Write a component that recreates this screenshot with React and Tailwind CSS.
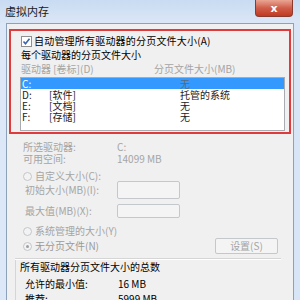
import React from "react";

const F = { fontFamily: '"Noto Sans CJK SC", "Noto Sans", sans-serif' };

function Radio({ checked }) {
  return (
    <span className="relative inline-block w-[9px] h-[9px] rounded-full border border-[#c3c6c9] bg-[#f3f3f3] shrink-0">
      {checked && (
        <span className="absolute left-[2px] top-[2px] w-[3px] h-[3px] rounded-full bg-[#9aa0a6]" />
      )}
    </span>
  );
}

export default function App() {
  return (
    <div
      className="w-[300px] h-[300px] overflow-hidden bg-[#d3e2f4] text-[10px] leading-none text-black flex flex-col"
      style={F}
    >
      {/* title bar */}
      <div className="h-[23px] shrink-0 flex items-start bg-gradient-to-b from-[#c8dbf2] to-[#dbe7f6] relative">
        <span className="ml-[5px] mt-[6px] text-[11px] text-[#1a1a1a]">虚拟内存</span>
        <div className="absolute left-[255px] top-0 w-[38px] h-[17px] rounded-b-[4px] border border-t-0 border-[#8a3a2e] bg-gradient-to-b from-[#e9a693] via-[#cf5d4a] to-[#c2381f] flex items-center justify-center">
          <span className="text-white text-[11px] font-bold leading-none" style={{ fontFamily: '"DejaVu Sans", sans-serif' }}>x</span>
        </div>
      </div>
      {/* body row */}
      <div className="flex-1 flex">
        <div className="w-[6px] shrink-0 bg-[#dce8f7]" />
        <div className="w-[288px] shrink-0 bg-[#f0f0f0] border-l border-r border-t border-[#8da1b8] flex flex-col">
          {/* red box */}
          <div className="ml-[2px] mt-[5px] w-[282px] h-[105px] border-2 border-[#df3a3c] flex flex-col">
            <div className="h-[14px] mt-[3px] flex items-center">
              <span className="ml-[10px] w-[11px] h-[11px] border border-[#8f8f8f] bg-white flex items-center justify-center">
                <svg width="9" height="9" viewBox="0 0 9 9">
                  <path d="M1.5 4.5 L3.5 6.8 L7.5 1.8" stroke="#3b64a6" strokeWidth="1.6" fill="none" />
                </svg>
              </span>
              <span className="ml-[2px] tracking-[0.2px]">自动管理所有驱动器的分页文件大小(A)</span>
            </div>
            <div className="h-[12px] mt-[1px] flex items-center ml-[10px]">每个驱动器的分页文件大小</div>
            <div className="h-[12px] mt-[2px] flex items-center text-[#a5a5a5]">
              <span className="ml-[10px] w-[133px]">驱动器 [卷标](D)</span>
              <span>分页文件大小(MB)</span>
            </div>
            <div className="ml-[9px] mt-[2px] w-[265px] h-[54px] border border-[#a8acb0] bg-white flex flex-col">
              <div className="h-[11px] shrink-0 bg-[#3399ff] text-white flex items-center">
                <span className="ml-[1px] w-[158px]">C:</span>
                <span className="text-[#5a6a7a]">无</span>
              </div>
              {[
                ["D:", "[软件]", "托管的系统"],
                ["E:", "[文档]", "无"],
                ["F:", "[存储]", "无"],
              ].map(([d, l, v]) => (
                <div key={d} className="h-[11px] shrink-0 flex items-center text-[#222]">
                  <span className="ml-[1px] w-[27px]">{d}</span>
                  <span className="w-[131px]">{l}</span>
                  <span>{v}</span>
                </div>
              ))}
            </div>
          </div>

          <div className="mt-[7px] h-[12px] flex items-center text-[#a5a5a5]">
            <span className="ml-[16px] w-[94px]">所选驱动器:</span>
            <span>C:</span>
          </div>
          <div className="h-[12px] flex items-center text-[#a5a5a5]">
            <span className="ml-[16px] w-[94px]">可用空间:</span>
            <span>14099 MB</span>
          </div>
          <div className="mt-[6px] h-[10px] flex items-center text-[#a5a5a5]">
            <span className="ml-[16px] flex"><Radio /></span>
            <span className="ml-[3px]">自定义大小(C):</span>
          </div>
          <div className="h-[18px] flex items-center text-[#a5a5a5]">
            <span className="ml-[18px] w-[92px]">初始大小(MB)(I):</span>
            <span className="w-[63px] h-[18px] border border-[#c5c8cb] rounded-[2px] bg-[#f4f4f4]" />
          </div>
          <div className="mt-[5px] h-[14px] flex items-center text-[#a5a5a5]">
            <span className="ml-[18px] w-[92px]">最大值(MB)(X):</span>
            <span className="w-[63px] h-[14px] border border-[#c5c8cb] rounded-[2px] bg-[#f4f4f4]" />
          </div>
          <div className="mt-[7px] h-[12px] flex items-center text-[#a5a5a5]">
            <span className="ml-[16px] flex"><Radio /></span>
            <span className="ml-[3px]">系统管理的大小(Y)</span>
          </div>
          <div className="mt-[2px] h-[14px] flex items-center text-[#9a9a9a]">
            <span className="ml-[16px] flex"><Radio checked /></span>
            <span className="ml-[3px] w-[180px]">无分页文件(N)</span>
            <span className="w-[63px] h-[16px] border border-[#c5c8cb] rounded-[2px] bg-[#f4f4f4] flex items-center justify-center text-[#a5a5a5]">
              设置(S)
            </span>
          </div>
          <div className="mt-[5px] ml-[8px] w-[266px] border-t border-[#d5d5d5] border-b-white border-b h-0" />
          <div className="flex-1 ml-[8px] border-l border-[#d5d5d5] flex flex-col">
            <div className="mt-[1px] h-[12px] flex items-center ml-[4px]">所有驱动器分页文件大小的总数</div>
            <div className="mt-[5px] h-[12px] flex items-center">
              <span className="ml-[9px] w-[93px]">允许的最小值:</span>
              <span>16 MB</span>
            </div>
            <div className="mt-[3px] h-[12px] flex items-center">
              <span className="ml-[9px] w-[93px]">推荐:</span>
              <span>5999 MB</span>
            </div>
          </div>
        </div>
        <div className="flex-1 bg-[#d7e5f6]" />
      </div>
    </div>
  );
}
